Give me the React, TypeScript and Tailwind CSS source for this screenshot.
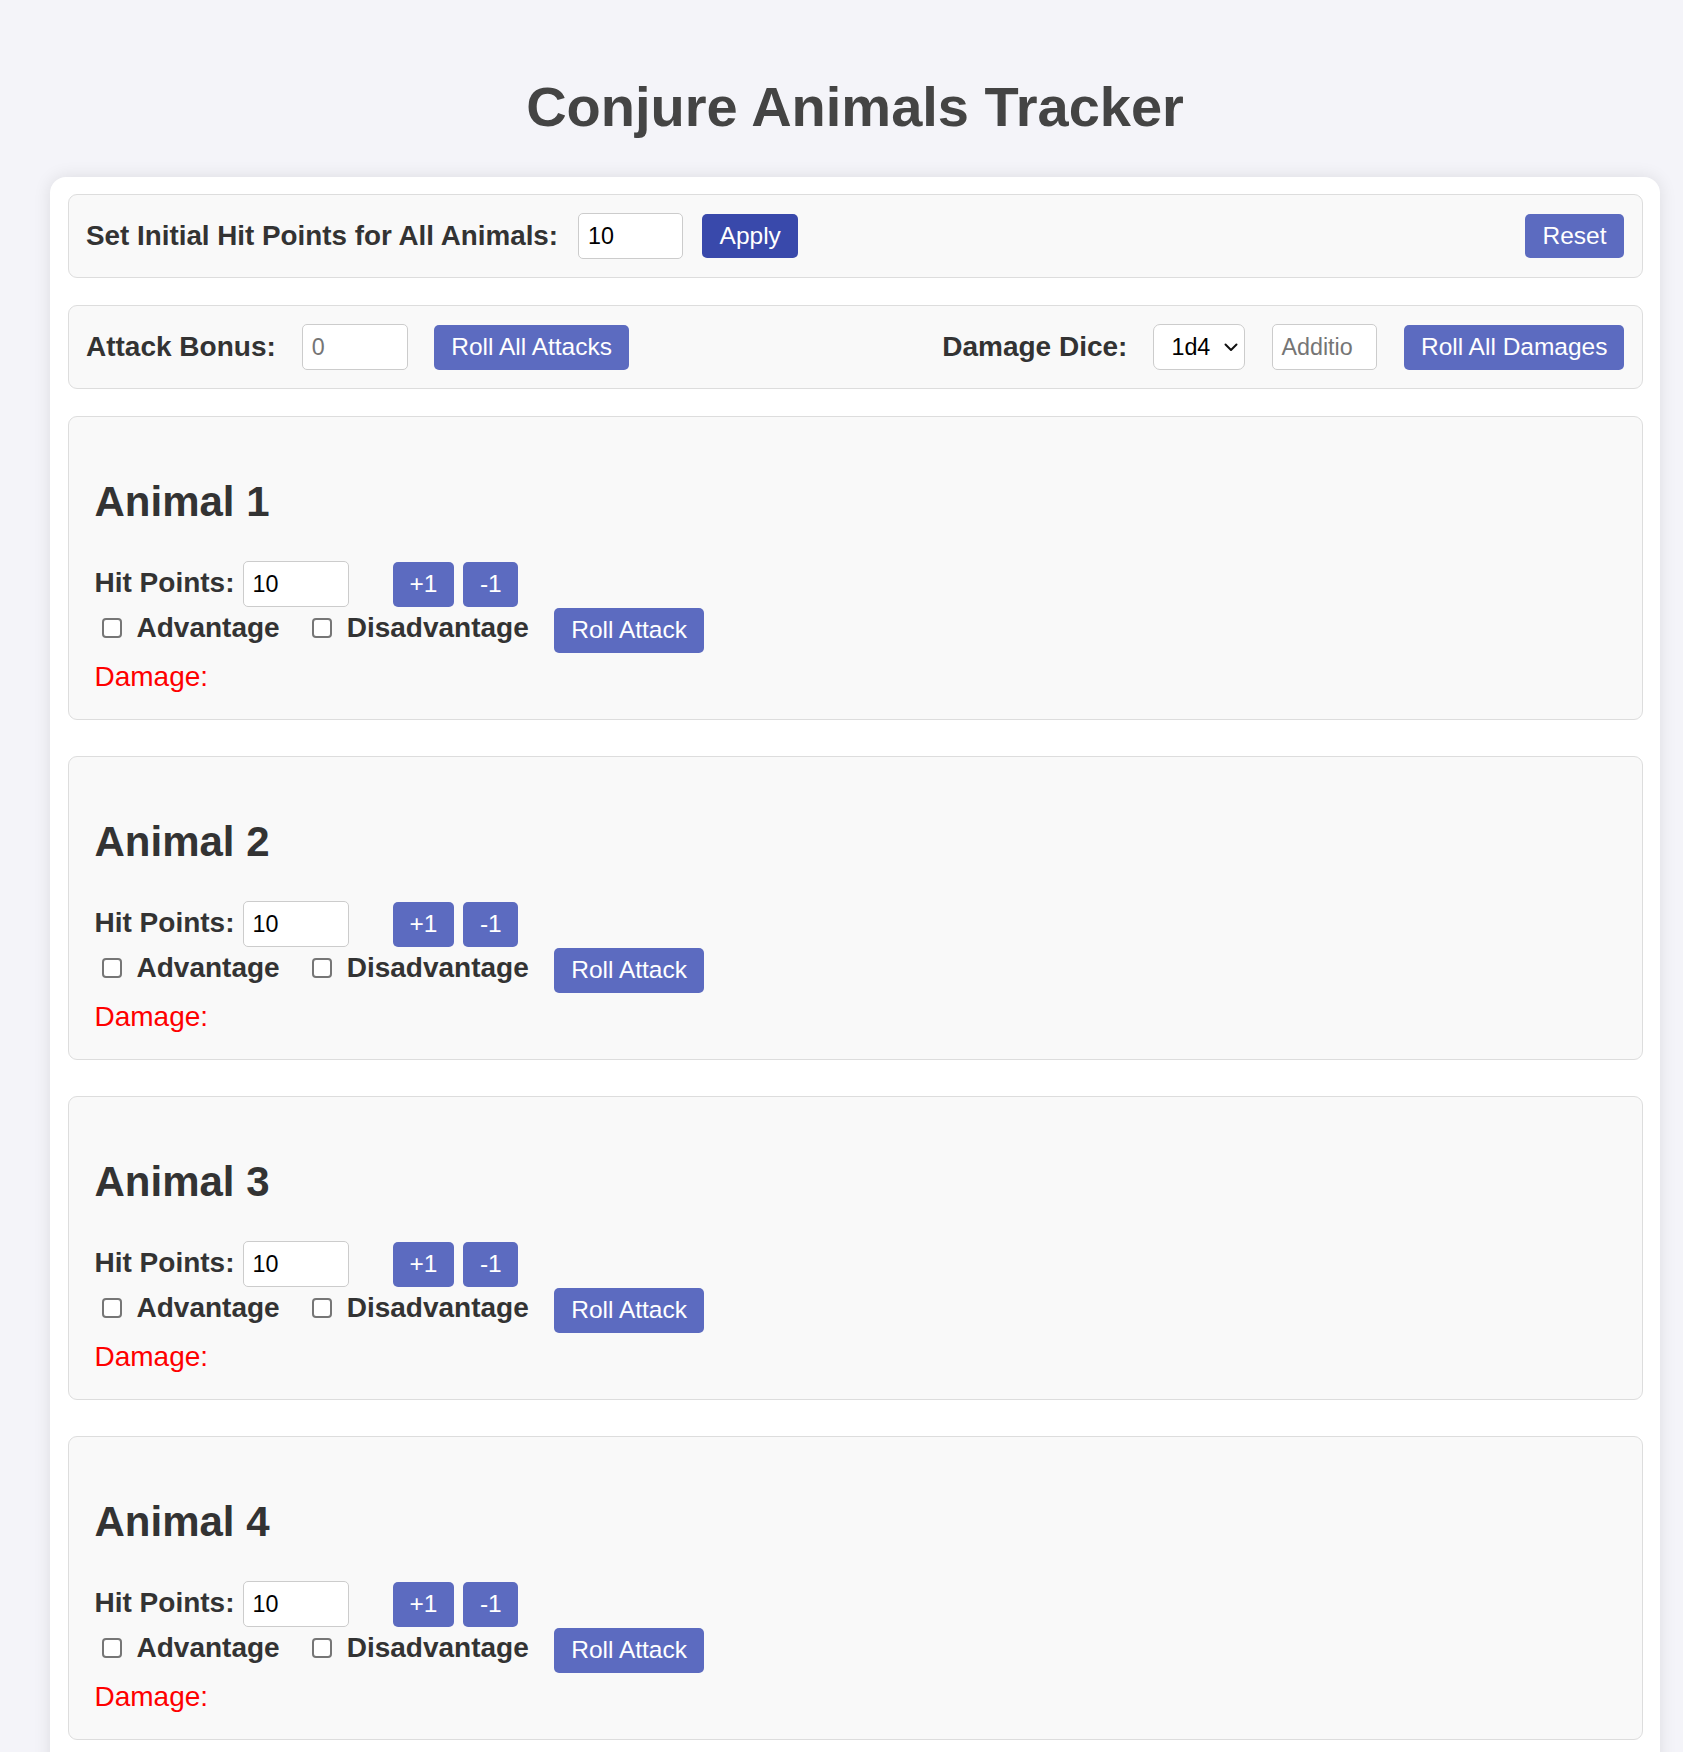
import { useState } from 'react';

const animals = [1, 2, 3, 4];

function AnimalCard({ n }: { n: number }) {
  return (
    <div className="mb-[36px] rounded-[9px] border border-[#dddddd] bg-[#f9f9f9] p-[26px]">
      <h2 className="mt-[35px] mb-[35px] text-[42px] font-bold leading-[48px] text-[#333]">Animal {n}</h2>
      <div className="flex h-[46px] items-center">
        <span className="mb-[2px] text-[28px] font-bold leading-[32px] text-[#333]">Hit Points:</span>
        <input
          type="number"
          defaultValue={10}
          className="ml-[8px] h-[46px] w-[106px] rounded-[5px] border border-[#cccccc] bg-white px-[9px] text-[23.3px] text-black outline-none [appearance:textfield]"
        />
        <button className="ml-[44px] h-[45px] rounded-[5px] bg-[#5c6bc0] px-[17px] text-[24.5px] text-white">+1</button>
        <button className="ml-[9px] h-[45px] rounded-[5px] bg-[#5c6bc0] px-[16.5px] text-[24.5px] text-white">-1</button>
      </div>
      <div className="mt-[1px] flex h-[45px] items-center">
        <label className="mb-[5px] flex items-center text-[28px] font-bold leading-[32px] text-[#333]">
          <input type="checkbox" className="ml-[7px] mr-[15px] h-[20px] w-[20px] appearance-none rounded-[4px] border-2 border-[#767676] bg-white" />
          Advantage
        </label>
        <label className="mb-[5px] ml-[32px] flex items-center text-[28px] font-bold leading-[32px] text-[#333]">
          <input type="checkbox" className="mr-[15px] h-[20px] w-[20px] appearance-none rounded-[4px] border-2 border-[#767676] bg-white" />
          Disadvantage
        </label>
        <button className="ml-[25px] h-[45px] rounded-[5px] bg-[#5c6bc0] px-[17.5px] text-[24.5px] text-white">Roll Attack</button>
      </div>
      <div className="mt-[8px] text-[28px] leading-[32px] text-[#ff0000]">Damage:</div>
    </div>
  );
}

export default function App() {
  const [dice, setDice] = useState('1d4');

  return (
    <div className="h-[1752px] overflow-hidden bg-[#f4f4f9] pt-[75px] pl-[50px] pr-[23px] font-['Liberation_Sans',Arial,sans-serif]">
      <h1 className="mb-[37.5px] text-center text-[56px] font-bold leading-[64px] text-[#444]">Conjure Animals Tracker</h1>

      <div className="rounded-[16px] bg-white p-[17.5px] shadow-[0_0_17px_rgba(0,0,0,0.1)]">
        {/* initial hp */}
        <div className="mb-[27px] flex items-center rounded-[9px] border border-[#dddddd] bg-[#f9f9f9] px-[17.5px] py-[18px]">
          <span className="text-[27.8px] font-bold leading-[32px] text-[#333]">Set Initial Hit Points for All Animals:</span>
          <input
            type="number"
            defaultValue={10}
            className="ml-[20px] h-[46px] w-[105px] rounded-[5px] border border-[#cccccc] bg-white px-[9px] text-[23.3px] text-black outline-none [appearance:textfield]"
          />
          <button className="ml-[19px] h-[44px] rounded-[5px] bg-[#3949ab] px-[17.5px] text-[24.5px] text-white">Apply</button>
          <button className="ml-auto h-[44px] rounded-[5px] bg-[#5c6bc0] px-[17.5px] text-[24.5px] text-white">Reset</button>
        </div>

        {/* attack / damage */}
        <div className="mb-[27px] flex items-center justify-between rounded-[9px] border border-[#dddddd] bg-[#f9f9f9] px-[17.5px] py-[18px]">
          <div className="flex items-center">
            <span className="text-[28px] font-bold leading-[32px] text-[#333]">Attack Bonus:</span>
            <input
              type="number"
              placeholder="0"
              className="ml-[26px] h-[46px] w-[106px] rounded-[5px] border border-[#cccccc] bg-white px-[9px] text-[23.3px] text-black outline-none placeholder:text-[#757575] [appearance:textfield]"
            />
            <button className="ml-[26px] h-[45px] rounded-[5px] bg-[#5c6bc0] px-[17.5px] text-[24.5px] text-white">Roll All Attacks</button>
          </div>
          <div className="flex items-center">
            <span className="text-[28px] font-bold leading-[32px] text-[#333]">Damage Dice:</span>
            <div className="relative ml-[26px]">
              <select
                value={dice}
                onChange={(e) => setDice(e.target.value)}
                className="h-[46px] w-[92px] appearance-none rounded-[7px] border border-[#cccccc] bg-white pl-[17px] text-[23.3px] text-black outline-none"
              >
                <option>1d4</option>
                <option>1d6</option>
                <option>1d8</option>
                <option>1d10</option>
                <option>1d12</option>
              </select>
              <svg className="pointer-events-none absolute top-[19px] left-[71px]" width="14" height="9" viewBox="0 0 14 9" fill="none">
                <path d="M1.5 1.5 L7 7 L12.5 1.5" stroke="#111" strokeWidth="2" strokeLinecap="round" strokeLinejoin="round" />
              </svg>
            </div>
            <input
              type="number"
              placeholder="Additional Damage"
              className="ml-[27px] h-[46px] w-[105px] rounded-[5px] border border-[#cccccc] bg-white px-[8px] text-[23.3px] text-black outline-none placeholder:text-[#757575] [appearance:textfield]"
            />
            <button className="ml-[27px] h-[45px] rounded-[5px] bg-[#5c6bc0] px-[16.5px] text-[24.5px] text-white">Roll All Damages</button>
          </div>
        </div>

        {animals.map((n) => (
          <AnimalCard key={n} n={n} />
        ))}
      </div>
    </div>
  );
}
